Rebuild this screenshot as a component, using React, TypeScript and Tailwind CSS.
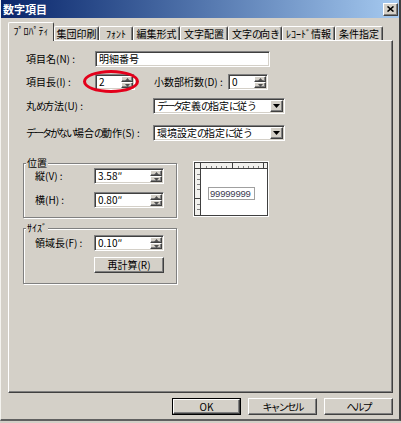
import React from "react";

// Windows classic 3D borders
const sunken =
  "border border-t-[#808080] border-l-[#808080] border-r-white border-b-white shadow-[inset_1px_1px_0_#404040,inset_-1px_-1px_0_#d4d0c8]";
const raised =
  "border border-t-white border-l-white border-r-[#404040] border-b-[#404040] shadow-[inset_-1px_-1px_0_#808080] bg-[#d4d0c8]";

const tabs = [
  { label: "ﾌﾟﾛﾊﾟﾃｨ", cls: "w-[46px]", active: true },
  { label: "集団印刷", cls: "w-[45px]" },
  { label: "ﾌｫﾝﾄ", cls: "w-[34px]" },
  { label: "編集形式", cls: "w-[47px]" },
  { label: "文字配置", cls: "w-[48px]" },
  { label: "文字の向き", cls: "w-[54px]" },
  { label: "ﾚｺｰﾄﾞ情報", cls: "w-[53px]" },
  { label: "条件指定", cls: "w-[48px]" },
];

// the dialog font has narrow kana; tighten full-width kana runs to match
const Jp = ({ text }: { text: string }) => (
  <>
    {text.split(/([\u3041-\u30ff]+)/).map((part, i) =>
      i % 2 ? (
        <span key={i} className="tracking-[-2px]">
          {part}
        </span>
      ) : (
        part
      )
    )}
  </>
);

const DownArrow = () => (
  <svg width="7" height="4" viewBox="0 0 7 4">
    <polygon points="0,0 7,0 3.5,4" fill="#000" />
  </svg>
);

const SpinButton = ({ up }: { up?: boolean }) => (
  <div className={`${raised} flex-1 flex items-center justify-center`}>
    <svg width="5" height="3" viewBox="0 0 5 3">
      <polygon points={up ? "0,3 5,3 2.5,0" : "0,0 5,0 2.5,3"} fill="#505050" />
    </svg>
  </div>
);

const TextField = ({ value, className }: { value: string; className: string }) => (
  <div className={`${sunken} bg-white h-[16px] p-px flex items-center ${className}`}>
    <span className="pl-[2px] leading-[12px]">{value}</span>
  </div>
);

const SpinField = ({ value, className }: { value: string; className: string }) => (
  <div className={`${sunken} bg-white h-[16px] p-px flex ${className}`}>
    <span className="flex-1 pl-[2px] leading-[12px]">{value}</span>
    <div className="flex flex-col w-[12px]">
      <SpinButton up />
      <SpinButton />
    </div>
  </div>
);

const SelectField = ({ value, className }: { value: string; className: string }) => (
  <div className={`${sunken} bg-white h-[16px] p-px flex ${className}`}>
    <span className="flex-1 pl-[2px] leading-[12px]">
      <Jp text={value} />
    </span>
    <div className={`${raised} w-[13px] flex items-center justify-center`}>
      <DownArrow />
    </div>
  </div>
);

const Button = ({ label, isDefault }: { label: string; isDefault?: boolean }) =>
  isDefault ? (
    <div className="w-[69px] h-[17px] border border-black flex">
      <div className={`${raised} flex-1 flex items-center justify-center`}>{label}</div>
    </div>
  ) : (
    <div className={`${raised} w-[69px] h-[17px] flex items-center justify-center`}>
      <Jp text={label} />
    </div>
  );

const Group = ({ title, className, children }: { title: string; className: string; children: React.ReactNode }) => (
  <div className={`relative border border-[#808080] shadow-[1px_1px_0_#fff,inset_1px_1px_0_#fff] ${className}`}>
    {/* group caption sits on the etched line */}
    <span className="absolute left-[2px] -top-[7px] bg-[#d4d0c8] px-px leading-[12px]">{title}</span>
    {children}
  </div>
);

const Preview = () => (
  <div className="w-[76px] h-[56px] bg-white -mt-[2px]">
    <svg width="76" height="56" viewBox="0 0 76 56">
      <rect x="1.5" y="1.5" width="73" height="53" fill="#fff" stroke="#404040" />
      <rect x="2" y="2" width="72" height="5" fill="#f2f1ee" />
      <rect x="2" y="2" width="5" height="52" fill="#f2f1ee" />
      <line x1="2" y1="7.5" x2="74" y2="7.5" stroke="#404040" />
      <line x1="7.5" y1="2" x2="7.5" y2="54" stroke="#404040" />
      {[13, 18, 23, 28, 33, 45, 50, 55, 60, 65].map((x) => (
        <line key={x} x1={x + 0.5} y1="5" x2={x + 0.5} y2="7" stroke="#808080" />
      ))}
      {[39, 70].map((x) => (
        <line key={x} x1={x + 0.5} y1="2" x2={x + 0.5} y2="7" stroke="#404040" />
      ))}
      {[13, 18, 23, 28, 43, 48].map((y) => (
        <line key={y} x1="4" y1={y + 0.5} x2="7" y2={y + 0.5} stroke="#808080" />
      ))}
      <line x1="2" y1="37.5" x2="7" y2="37.5" stroke="#404040" />
      <rect x="15.5" y="26.5" width="46" height="12" fill="#fff" stroke="#a0a0a0" />
      <text x="17" y="36" fontSize="9.5" fill="#3a3a50" fontFamily="Liberation Sans, sans-serif" letterSpacing="-0.2">
        99999999
      </text>
    </svg>
  </div>
);

export default function App() {
  return (
    <div className="w-[401px] h-[423px] bg-[#d4d0c8] font-['Noto_Sans_CJK_JP',sans-serif] text-[10px] text-black leading-none">
      <div className="h-[421px] flex flex-col border-l border-l-[#f4f3ef] border-r-2 border-r-[#404040] border-b-2 border-b-[#606060]">
        {/* title bar */}
        <div className="h-[18px] flex items-center justify-between bg-gradient-to-r from-[#0a246a] to-[#a6caf0] pl-[2px] pr-[1px]">
          <span className="text-white font-bold text-[11px]">数字項目</span>
          <div className={`${raised} w-[15px] h-[13px] flex items-center justify-center`}>
            <svg width="7" height="6" viewBox="0 0 7 6">
              <path d="M0.5 0.5 L6.5 5.5 M6.5 0.5 L0.5 5.5" stroke="#000" strokeWidth="1.6" />
            </svg>
          </div>
        </div>

        {/* tab strip */}
        <div className="mt-[4px] ml-[7px] h-[18px] flex items-end">
          {tabs.map((t) =>
            t.active ? (
              <div
                key={t.label}
                className={`${t.cls} h-[19px] -mb-px relative z-10 bg-[#d4d0c8] border-t border-l border-t-white border-l-white border-r border-r-[#404040] rounded-t-[2px] flex items-center justify-center pb-[2px]`}
              >
                {t.label}
              </div>
            ) : (
              <div
                key={t.label}
                className={`${t.cls} h-[14px] border-t border-l border-t-white border-l-white border-r border-r-[#404040] shadow-[inset_-1px_0_0_#808080] rounded-t-[2px] flex items-center justify-center`}
              >
                <Jp text={t.label} />
              </div>
            )
          )}
        </div>

        {/* tab panel */}
        <div className="ml-[7px] w-[385px] h-[353px] border border-t-white border-l-white border-r-[#404040] border-b-[#404040] shadow-[inset_-1px_-1px_0_#808080] flex flex-col">
          <div className="mt-[10px] flex items-center h-[16px]">
            <span className="ml-[17px] w-[69px]">項目名(N) :</span>
            <TextField value="明細番号" className="w-[175px]" />
          </div>

          <div className="mt-[7px] flex items-center h-[16px]">
            <span className="ml-[17px] w-[69px]">項目長(I) :</span>
            <div className="relative">
              <SpinField value="2" className="w-[40px]" />
              {/* red highlight ring */}
              <div className="absolute -left-[12px] -top-[4px] w-[56px] h-[23px] rounded-[50%] border-[3px] border-[#e3001b]" />
            </div>
            <span className="ml-[19px] w-[74px]">小数部桁数(D) :</span>
            <SpinField value="0" className="w-[40px]" />
          </div>

          <div className="mt-[8px] flex items-center h-[16px]">
            <span className="ml-[17px] w-[127px]">
              <Jp text="丸め方法(U) :" />
            </span>
            <SelectField value="データ定義の指定に従う" className="w-[132px]" />
          </div>

          <div className="mt-[11px] flex items-center h-[16px]">
            <span className="ml-[17px] w-[127px]">
              <Jp text="データがない場合の動作(S) :" />
            </span>
            <SelectField value="環境設定の指定に従う" className="w-[132px]" />
          </div>

          <div className="mt-[22px] ml-[14px] flex items-start">
            <div className="flex flex-col w-[154px]">
              <Group title="位置" className="h-[55px] flex flex-col">
                <div className="mt-[4px] flex items-center h-[16px]">
                  <span className="ml-[11px] w-[59px]">縦(V) :</span>
                  <SpinField value="3.58″" className="w-[70px]" />
                </div>
                <div className="mt-[8px] flex items-center h-[16px]">
                  <span className="ml-[11px] w-[59px]">横(H) :</span>
                  <SpinField value="0.80″" className="w-[70px]" />
                </div>
              </Group>

              <Group title="ｻｲｽﾞ" className="mt-[10px] h-[56px] flex flex-col">
                <div className="mt-[6px] flex items-center h-[16px]">
                  <span className="ml-[11px] w-[59px]">領域長(F) :</span>
                  <SpinField value="0.10″" className="w-[70px]" />
                </div>
                <div className={`${raised} mt-[6px] ml-[70px] w-[70px] h-[16px] flex items-center justify-center`}>
                  再計算(R)
                </div>
              </Group>
            </div>
            <div className="ml-[16px]">
              <Preview />
            </div>
          </div>
        </div>

        {/* dialog buttons */}
        <div className="mt-[5px] mr-[6px] flex justify-end gap-[7px]">
          <Button label="OK" isDefault />
          <Button label="キャンセル" />
          <Button label="ヘルプ" />
        </div>
      </div>
    </div>
  );
}
